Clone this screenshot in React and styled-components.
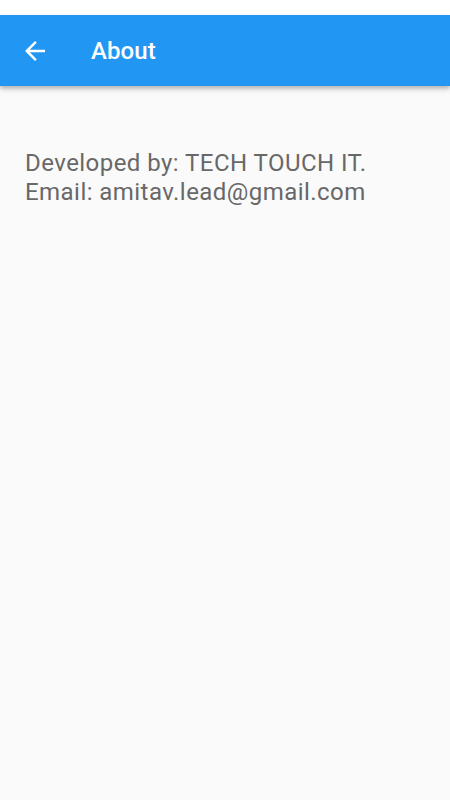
import React from "react";
import styled, { createGlobalStyle } from "styled-components";

const Global = createGlobalStyle`
  html, body { margin: 0; padding: 0; background: #fafafa; }
  body { font-family: Roboto, "Noto Sans", sans-serif; }
`;

const Page = styled.div`
  width: 450px;
  height: 800px;
  background: #fafafa;
  display: flex;
  flex-direction: column;
  overflow: hidden;
`;

const StatusBar = styled.div`
  height: 15px;
  background: #ffffff;
  flex-shrink: 0;
`;

const AppBar = styled.header`
  height: 71px;
  background: #2196f3;
  display: flex;
  align-items: center;
  padding-left: 20px;
  gap: 41px;
  box-shadow: 0 2px 4px rgba(0, 0, 0, 0.22), 0 4px 6px rgba(0, 0, 0, 0.1);
  position: relative;
  z-index: 1;
  flex-shrink: 0;
`;

const IconButton = styled.button`
  border: 0;
  background: transparent;
  padding: 0;
  width: 30px;
  height: 30px;
  display: flex;
  align-items: center;
  justify-content: center;
  color: #fff;
`;

const Title = styled.h1`
  margin: 0;
  font-size: 24px;
  font-weight: 500;
  color: #ffffff;
  letter-spacing: 0.1px;
`;

const Content = styled.main`
  padding: 63px 25px 0;
`;

const Line = styled.p`
  margin: 0;
  font-size: 24px;
  line-height: 29px;
  letter-spacing: 0.45px;
  color: #686868;
`;

export default function App() {
  return (
    <Page>
      <Global />
      <StatusBar />
      <AppBar>
        <IconButton aria-label="Back">
          <svg width="30" height="30" viewBox="0 0 24 24" fill="#fff">
            <path d="M20 11H7.83l5.59-5.59L12 4l-8 8 8 8 1.41-1.41L7.83 13H20v-2z" />
          </svg>
        </IconButton>
        <Title>About</Title>
      </AppBar>
      <Content>
        <Line>Developed by: TECH TOUCH IT.</Line>
        <Line>Email: amitav.lead@gmail.com</Line>
      </Content>
    </Page>
  );
}
